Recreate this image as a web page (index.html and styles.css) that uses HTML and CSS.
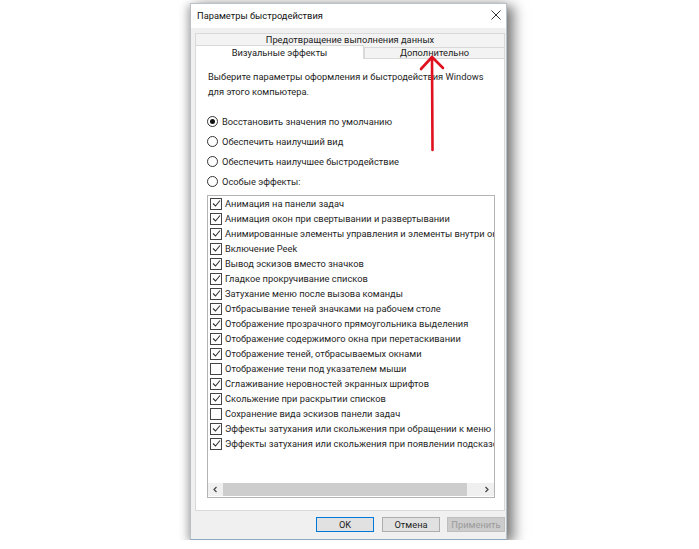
FILE: index.html
```html
<!DOCTYPE html>
<html lang="ru">
<head>
    <meta charset="UTF-8">
    <meta name="viewport" content="width=device-width, initial-scale=1.0">
    <title>Параметры быстродействия</title>
    <link rel="stylesheet" href="styles.css">
</head>
<body>
    <div class="window">
        <div class="titlebar">
            <span class="title">Параметры быстродействия</span>
            <svg class="close" width="10" height="10" viewBox="0 0 10 10">
                <path d="M0.5 0.5 L9.5 9.5 M9.5 0.5 L0.5 9.5" stroke="#333" stroke-width="1" fill="none"/>
            </svg>
        </div>

        <div class="client">
            <div class="tabstrip">
                <div class="tab-row">
                    <div class="tab">Предотвращение выполнения данных</div>
                </div>
                <div class="tab-row lower">
                    <div class="tab selected">Визуальные эффекты</div>
                    <div class="tab">Дополнительно</div>
                </div>
            </div>

            <div class="panel">
                <p class="intro">Выберите параметры оформления и быстродействия Windows для этого компьютера.</p>

                <div class="radios">
                    <label class="radio"><span class="dot checked"></span>Восстановить значения по умолчанию</label>
                    <label class="radio"><span class="dot"></span>Обеспечить наилучший вид</label>
                    <label class="radio"><span class="dot"></span>Обеспечить наилучшее быстродействие</label>
                    <label class="radio"><span class="dot"></span>Особые эффекты:</label>
                </div>

                <div class="listbox">
                    <ul class="items" id="items"></ul>
                    <div class="hscroll">
                        <svg class="arrow" width="15" height="13" viewBox="0 0 15 13">
                            <path d="M8.5 4 L6 6.5 L8.5 9" stroke="#444" stroke-width="1.2" fill="none"/>
                        </svg>
                        <div class="track"><div class="thumb"></div></div>
                        <svg class="arrow" width="15" height="13" viewBox="0 0 15 13">
                            <path d="M6.5 4 L9 6.5 L6.5 9" stroke="#444" stroke-width="1.2" fill="none"/>
                        </svg>
                    </div>
                </div>
            </div>

            <div class="buttons">
                <button class="btn default">OK</button>
                <button class="btn">Отмена</button>
                <button class="btn" disabled>Применить</button>
            </div>
        </div>
    </div>

    <!-- pointer drawn over the dialog -->
    <svg class="pointer" width="36" height="100" viewBox="0 0 36 100">
        <path d="M17 3 L17.5 96 M6 15 L17 3 L28 14" stroke="#e0101e" stroke-width="2.6" fill="none" stroke-linecap="round" stroke-linejoin="round"/>
    </svg>

    <script>
        const effects = [
            ["Анимация на панели задач", true],
            ["Анимация окон при свертывании и развертывании", true],
            ["Анимированные элементы управления и элементы внутри окна", true],
            ["Включение Peek", true],
            ["Вывод эскизов вместо значков", true],
            ["Гладкое прокручивание списков", true],
            ["Затухание меню после вызова команды", true],
            ["Отбрасывание теней значками на рабочем столе", true],
            ["Отображение прозрачного прямоугольника выделения", true],
            ["Отображение содержимого окна при перетаскивании", true],
            ["Отображение теней, отбрасываемых окнами", true],
            ["Отображение тени под указателем мыши", false],
            ["Сглаживание неровностей экранных шрифтов", true],
            ["Скольжение при раскрытии списков", true],
            ["Сохранение вида эскизов панели задач", false],
            ["Эффекты затухания или скольжения при обращении к меню", true],
            ["Эффекты затухания или скольжения при появлении подсказок", true]
        ];

        const tick = '<svg width="9" height="9" viewBox="0 0 9 9"><path d="M1 4.5 L3.5 7 L8 1.5" stroke="#333" stroke-width="1.1" fill="none"/></svg>';

        const list = document.getElementById("items");
        effects.forEach(([text, on]) => {
            const li = document.createElement("li");
            li.innerHTML = `<span class="box">${on ? tick : ""}</span>${text}`;
            list.appendChild(li);
        });
    </script>
</body>
</html>
```

FILE: styles.css
```css
body {
    margin: 0;
    background: #ffffff;
    font-family: Roboto, 'Noto Sans', sans-serif;
    font-size: 9.3px;
    color: #1e1e1e;
}
.window {
    width: 315px;
    height: 535px;
    margin: 3px 0 0 190px;
    border: 1px solid #b8c0c8;
    border-bottom-color: #8fa6bf;
    background: #f0f0f0;
    display: flex;
    flex-direction: column;
    box-shadow: 7px 3px 12px rgba(0, 0, 0, 0.5), -3px 2px 8px rgba(0, 0, 0, 0.25);
}
.titlebar {
    height: 24px;
    background: #ffffff;
    display: flex;
    align-items: center;
    justify-content: space-between;
    padding: 0 5px 0 6px;
}
.title {
    color: #111;
    margin-bottom: 1px;
}
.close {
    margin-bottom: 2px;
}
.client {
    flex: 1;
    display: flex;
    flex-direction: column;
    padding: 5px 1px 0 4px;
}
.tabstrip {
    display: flex;
    flex-direction: column;
}
.tab-row {
    display: flex;
    height: 14px;
}
.tab-row.lower {
    height: 11px;
}
.tab {
    flex: 1;
    border: 1px solid #d9d9d9;
    border-bottom: none;
    background: #f3f3f3;
    text-align: center;
    line-height: 12px;
    color: #222;
}
.tab-row.lower .tab {
    line-height: 10px;
}
.tab-row.lower .tab.selected {
    flex: 0 0 167px;
    background: #ffffff;
    margin-top: -2px;
    margin-bottom: -1px;
    position: relative;
    z-index: 1;
    line-height: 13px;
}
.panel {
    height: 441px;
    background: #ffffff;
    border: 1px solid #d9d9d9;
    padding: 10px 9px 0 11px;
    display: flex;
    flex-direction: column;
}
.intro {
    margin: 0 0 12px 1px;
    line-height: 15px;
    width: 288px;
}
.radios {
    display: flex;
    flex-direction: column;
}
.radio {
    height: 20px;
    display: flex;
    align-items: center;
}
.dot {
    width: 9px;
    height: 9px;
    border: 1px solid #333;
    border-radius: 50%;
    margin-right: 4px;
    display: flex;
    align-items: center;
    justify-content: center;
}
.dot.checked::after {
    content: "";
    width: 5px;
    height: 5px;
    border-radius: 50%;
    background: #111;
}
.listbox {
    margin-top: 4px;
    height: 301px;
    border: 1px solid #b4b4b4;
    display: flex;
    flex-direction: column;
    overflow: hidden;
}
.items {
    flex: 1;
    list-style: none;
    margin: 0;
    padding: 0 0 0 2px;
    overflow: hidden;
}
.items li {
    height: 15px;
    display: flex;
    align-items: center;
    white-space: nowrap;
}
.box {
    flex: none;
    width: 10px;
    height: 10px;
    border: 1px solid #444;
    margin-right: 3px;
    display: flex;
    align-items: center;
    justify-content: center;
}
.hscroll {
    height: 13px;
    margin-bottom: 1px;
    background: #f0f0f0;
    display: flex;
    align-items: center;
}
.arrow {
    flex: none;
}
.track {
    flex: 1;
    height: 13px;
}
.thumb {
    width: 244px;
    height: 13px;
    background: #cdcdcd;
}
.buttons {
    display: flex;
    justify-content: flex-end;
    gap: 7px;
    padding-top: 6px;
}
.btn {
    width: 58px;
    height: 15px;
    padding: 0;
    font: inherit;
    color: #1e1e1e;
    background: #e1e1e1;
    border: 1px solid #adadad;
}
.btn.default {
    border-color: #0078d7;
    margin-right: 1px;
}
.btn:disabled {
    background: #cccccc;
    border-color: #bfbfbf;
    color: #9a9a9a;
}
.pointer {
    position: absolute;
    left: 415px;
    top: 54px;
}
```
